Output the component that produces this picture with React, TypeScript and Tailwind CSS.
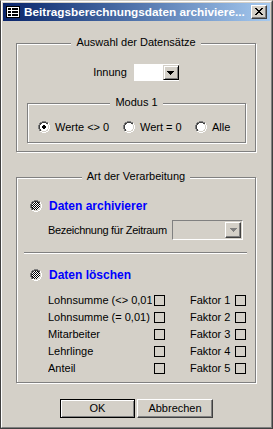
import React from "react";

const G = "#808080";
const D = "#404040";
const L = "#d4d0c8";
const W = "#ffffff";
const B = "#000000";

function Radio({ checked = false, mixed = false }: { checked?: boolean; mixed?: boolean }) {
  const rects: React.ReactNode[] = [];
  for (let y = 0; y < 12; y++) {
    for (let x = 0; x < 12; x++) {
      const dx = x - 5.5;
      const dy = y - 5.5;
      const d = Math.hypot(dx, dy);
      let c: string | null = null;
      if (d > 6) c = null;
      else if (d > 5) c = dx + dy <= 0 ? G : W;
      else if (d > 4) c = dx + dy <= 0 ? D : L;
      else if (mixed) c = (x + y) % 2 ? B : W;
      else c = checked && d < 2 ? B : W;
      if (c) rects.push(<rect key={`${x}-${y}`} x={x} y={y} width={1} height={1} fill={c} />);
    }
  }
  return (
    <svg width={12} height={12} shapeRendering="crispEdges" className="block shrink-0">
      {rects}
    </svg>
  );
}

function Check() {
  return <div className="w-[11px] h-[11px] border border-black shrink-0" />;
}

function Arrow({ color }: { color: string }) {
  return (
    <svg width={7} height={4} shapeRendering="crispEdges" className="block">
      <rect x={0} y={0} width={7} height={1} fill={color} />
      <rect x={1} y={1} width={5} height={1} fill={color} />
      <rect x={2} y={2} width={3} height={1} fill={color} />
      <rect x={3} y={3} width={1} height={1} fill={color} />
    </svg>
  );
}

function Group({
  label,
  className,
  children,
}: {
  label: string;
  className: string;
  children: React.ReactNode;
}) {
  return (
    <div
      className={
        "relative border border-[#808080] shadow-[inset_1px_1px_0_#ffffff,1px_1px_0_#ffffff] " + className
      }
    >
      <div className="absolute left-0 right-0 top-[-9px] flex justify-center">
        <span className="bg-[#d4d0c8] px-[5px] leading-[14px] whitespace-nowrap">{label}</span>
      </div>
      {children}
    </div>
  );
}

function TitleIcon() {
  return (
    <svg width={14} height={12} shapeRendering="crispEdges" className="block shrink-0">
      <rect x={0} y={0} width={14} height={12} fill="#000" />
      <rect x={1} y={1} width={12} height={10} fill="#fff" />
      <rect x={2} y={2} width={3} height={2} fill="#000" />
      <rect x={6} y={2} width={6} height={2} fill="#000" />
      <rect x={2} y={5} width={3} height={2} fill="#000" />
      <rect x={6} y={5} width={6} height={2} fill="#000" />
      <rect x={2} y={8} width={3} height={2} fill="#000" />
      <rect x={6} y={8} width={6} height={2} fill="#000" />
    </svg>
  );
}

function CloseGlyph() {
  const rows = ["XX....XX", ".XX..XX.", "..XXXX..", "...XX...", "..XXXX..", ".XX..XX.", "XX....XX"];
  const rects: React.ReactNode[] = [];
  rows.forEach((r, y) =>
    r.split("").forEach((ch, x) => {
      if (ch === "X") rects.push(<rect key={`${x}-${y}`} x={x} y={y} width={1} height={1} fill="#000" />);
    })
  );
  return (
    <svg width={8} height={7} shapeRendering="crispEdges" className="block">
      {rects}
    </svg>
  );
}

const rowsLeft = ["Lohnsumme (<> 0,01)", "Lohnsumme (= 0,01)", "Mitarbeiter", "Lehrlinge", "Anteil"];

export default function App() {
  return (
    <div className="w-[273px] h-[429px] bg-[#d4d0c8] border border-t-[#d4d0c8] border-l-[#404040] border-r-[#404040] border-b-[#404040] text-[11px] leading-none text-black font-['Liberation_Sans',Arial,sans-serif]">
      <div className="h-full flex flex-col border border-t-white border-l-white border-r-[#808080] border-b-[#808080] p-px">
        {/* title bar */}
        <div className="h-[18px] shrink-0 flex items-center bg-linear-to-r from-[#0a246a] to-[#a6caf0] pl-[3px] pr-[3px]">
          <TitleIcon />
          <span className="ml-[4px] text-white font-bold text-[11.75px] whitespace-nowrap">
            Beitragsberechnungsdaten archiviere...
          </span>
          <div className="ml-auto w-[16px] h-[14px] bg-[#d4d0c8] border border-t-white border-l-white border-r-[#404040] border-b-[#404040] shadow-[inset_-1px_-1px_0_#808080] flex items-center justify-center pb-px">
            <CloseGlyph />
          </div>
        </div>

        {/* content */}
        <div className="flex flex-col px-[13px] pt-[22px]">
          <Group label="Auswahl der Datensätze" className="w-[240px] h-[109px] flex flex-col items-center">
            <div className="mt-[20px] flex items-center gap-[7px]">
              <span>Innung</span>
              <div className="w-[45px] h-[17px] bg-white flex items-center justify-end">
                <div className="w-[16px] h-[15px] bg-[#d4d0c8] border border-t-[#d4d0c8] border-l-[#d4d0c8] border-r-black border-b-black shadow-[inset_1px_1px_0_#ffffff,inset_-1px_-1px_0_#808080] flex items-center justify-center">
                  <Arrow color="#000" />
                </div>
              </div>
            </div>
            <Group label="Modus 1" className="mt-[22px] ml-[10px] self-start w-[219px] h-[40px]">
              <div className="mt-[17px] pl-[10px] flex items-center h-[12px]">
                <div className="w-[85px] flex items-center gap-[5px]">
                  <Radio checked />
                  <span className="whitespace-nowrap">Werte &lt;&gt; 0</span>
                </div>
                <div className="w-[72px] flex items-center gap-[5px]">
                  <Radio />
                  <span className="whitespace-nowrap">Wert = 0</span>
                </div>
                <div className="flex items-center gap-[5px]">
                  <Radio />
                  <span className="whitespace-nowrap">Alle</span>
                </div>
              </div>
            </Group>
          </Group>

          <Group label="Art der Verarbeitung" className="mt-[25px] w-[240px] h-[206px] flex flex-col">
            <div className="mt-[22px] pl-[13px] h-[12px] flex items-center">
              <Radio mixed />
              <span className="ml-[7px] text-[12px] font-bold text-[#0000ff] whitespace-nowrap">
                Daten archivierer
              </span>
            </div>
            <div className="mt-[8px] pl-[31px] h-[20px] flex items-center">
              <span className="w-[124px] shrink-0 whitespace-nowrap tracking-[-0.3px]">Bezeichnung für Zeitraum</span>
              <div className="w-[71px] h-[20px] border border-t-[#808080] border-l-[#808080] border-r-white border-b-white flex items-center justify-end pr-px">
                <div className="w-[16px] h-[16px] bg-[#d4d0c8] border border-t-white border-l-white border-r-[#404040] border-b-[#404040] shadow-[inset_-1px_-1px_0_#808080] flex items-center justify-center">
                  <Arrow color="#808080" />
                </div>
              </div>
            </div>
            <div className="mt-[12px] ml-[7px] w-[223px] h-[2px] border-t border-t-[#808080] border-b border-b-white" />
            <div className="mt-[15px] pl-[13px] h-[12px] flex items-center">
              <Radio mixed />
              <span className="ml-[7px] text-[12px] font-bold text-[#0000ff] whitespace-nowrap">
                Daten löschen
              </span>
            </div>
            <div className="mt-[11px] flex flex-col">
              {rowsLeft.map((t, i) => (
                <div key={t} className="h-[17px] pl-[31px] flex items-center">
                  <span className="w-[104px] overflow-hidden whitespace-nowrap">{t}</span>
                  <div className="ml-[2px]">
                    <Check />
                  </div>
                  <span className="ml-[25px] w-[45px] whitespace-nowrap">Faktor {i + 1}</span>
                  <Check />
                </div>
              ))}
            </div>
          </Group>

          <div className="mt-[16px] flex justify-center gap-[2px]">
            <div className="w-[75px] h-[19px] border border-black bg-[#d4d0c8] shadow-[inset_1px_1px_0_#ffffff,inset_-1px_-1px_0_#808080] flex items-center justify-center">
              OK
            </div>
            <div className="w-[76px] h-[19px] border border-t-white border-l-white border-r-[#404040] border-b-[#404040] bg-[#d4d0c8] shadow-[inset_-1px_-1px_0_#808080] flex items-center justify-center">
              Abbrechen
            </div>
          </div>
        </div>
      </div>
    </div>
  );
}
